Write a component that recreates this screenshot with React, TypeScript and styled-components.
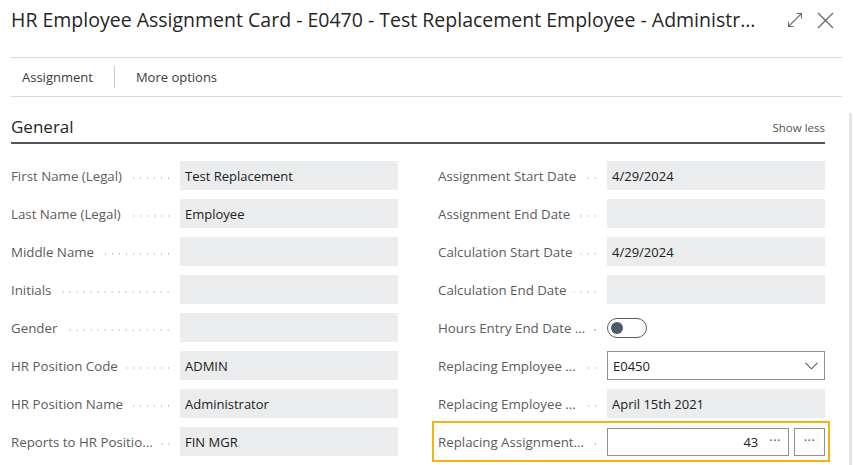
import React from 'react'
import styled, { createGlobalStyle, css } from 'styled-components'

const GlobalStyle = createGlobalStyle`
  html, body {
    margin: 0;
    padding: 0;
    background: #ffffff;
  }
  body {
    font-family: 'Open Sans', 'Noto Sans', sans-serif;
    color: #212121;
  }
  * {
    box-sizing: border-box;
  }
`

type Field = {
  label: string
  value?: string
  kind?: 'text' | 'toggle' | 'select' | 'lookup'
}

const leftFields: Field[] = [
  { label: 'First Name (Legal)', value: 'Test Replacement' },
  { label: 'Last Name (Legal)', value: 'Employee' },
  { label: 'Middle Name' },
  { label: 'Initials' },
  { label: 'Gender' },
  { label: 'HR Position Code', value: 'ADMIN' },
  { label: 'HR Position Name', value: 'Administrator' },
  { label: 'Reports to HR Positio...', value: 'FIN MGR' },
]

const rightFields: Field[] = [
  { label: 'Assignment Start Date', value: '4/29/2024' },
  { label: 'Assignment End Date' },
  { label: 'Calculation Start Date', value: '4/29/2024' },
  { label: 'Calculation End Date' },
  { label: 'Hours Entry End Date ...', kind: 'toggle' },
  { label: 'Replacing Employee ...', value: 'E0450', kind: 'select' },
  { label: 'Replacing Employee ...', value: 'April 15th 2021' },
  { label: 'Replacing Assignment...', value: '43', kind: 'lookup' },
]

const Page = styled.div`
  width: 853px;
  height: 465px;
  overflow: hidden;
  display: flex;
  flex-direction: column;
`

const Header = styled.div`
  height: 58px;
  margin: 0 11px;
  padding-top: 7px;
  display: flex;
  align-items: flex-start;
  border-bottom: 1px solid #d8d8d8;
`

const Title = styled.h1`
  margin: 0;
  width: 752px;
  font-size: 19.5px;
  font-weight: 400;
  line-height: 26px;
  color: #262626;
  white-space: nowrap;
`

const HeaderIcons = styled.div`
  display: flex;
  align-items: center;
  gap: 14px;
  margin-left: 24px;
  height: 26px;
  color: #6b6b6b;
`

const ActionBar = styled.div`
  height: 39px;
  margin: 0 11px;
  display: flex;
  align-items: center;
  border-bottom: 1px solid #d8d8d8;
`

const Action = styled.span`
  font-size: 13px;
  color: #3b3b3b;
  padding: 0 11px;
`

const ActionDivider = styled.span`
  width: 1px;
  height: 22px;
  background: #c8c8c8;
  margin: 0 10px;
`

const Body = styled.div`
  flex: 1;
  display: flex;
  min-height: 0;
`

const Content = styled.div`
  flex: 1;
  padding: 0 24px 0 11px;
`

const Scrollbar = styled.div`
  width: 3px;
  margin: 16px 1px 0 0;
  background: #e4e4e4;
`

const SectionHead = styled.div`
  height: 47px;
  display: flex;
  align-items: flex-end;
  justify-content: space-between;
  border-bottom: 2px solid #51565b;
  padding-bottom: 3px;
`

const SectionTitle = styled.h2`
  margin: 0;
  font-size: 17px;
  font-weight: 400;
  line-height: 24px;
  color: #262626;
`

const ShowLess = styled.span`
  font-size: 11.5px;
  color: #505050;
  line-height: 20px;
  margin-bottom: 1px;
`

const Grid = styled.div`
  display: grid;
  grid-template-columns: 387px 387px;
  column-gap: 40px;
  margin-top: 17px;
`

const Column = styled.div`
  display: flex;
  flex-direction: column;
  gap: 9px;
`

const Row = styled.div<{ $focused?: boolean }>`
  position: relative;
  display: flex;
  align-items: center;
  height: 29px;

  ${({ $focused }) =>
    $focused &&
    css`
      &::after {
        content: '';
        position: absolute;
        left: -6px;
        right: -5px;
        top: -6px;
        bottom: -6px;
        border: 2px solid #f3b40f;
        pointer-events: none;
      }
    `}
`

const Label = styled.div`
  width: 169px;
  flex-shrink: 0;
  display: flex;
  align-items: center;
  padding-right: 8px;
  font-size: 13.3px;
  color: #5c5c5c;
  white-space: nowrap;
  overflow: hidden;
`

const LabelText = styled.span`
  flex-shrink: 0;
`

const Leader = styled.span`
  flex: 1;
  height: 4px;
  margin: 4px 0 0 8px;
  background-image: radial-gradient(circle, #c4c4c4 0.75px, transparent 1.1px);
  background-size: 7px 4px;
  background-position: right center;
  background-repeat: repeat-x;
`

const Input = styled.div<{ $variant?: 'plain' | 'boxed' }>`
  flex: 1;
  height: 29px;
  display: flex;
  align-items: center;
  padding: 0 5px;
  font-size: 13px;
  color: #212121;
  background: #eaeced;

  ${({ $variant }) =>
    $variant === 'boxed' &&
    css`
      background: #ffffff;
      border: 1px solid #8f8f8f;
      justify-content: space-between;
      padding: 0 6px 0 5px;
    `}
`

const ToggleWrap = styled.div`
  flex: 1;
  display: flex;
  align-items: center;
`

const Toggle = styled.div`
  width: 40px;
  height: 20px;
  border: 1px solid #5b5b5b;
  border-radius: 10px;
  display: flex;
  align-items: center;
  padding-left: 3px;

  &::before {
    content: '';
    width: 12px;
    height: 12px;
    border-radius: 50%;
    background: #4f5a6a;
  }
`

const LookupWrap = styled.div`
  flex: 1;
  display: flex;
  align-items: center;
  gap: 5px;
  height: 29px;
`

const LookupInput = styled.div`
  flex: 1;
  height: 28px;
  display: flex;
  align-items: center;
  justify-content: flex-end;
  gap: 11px;
  padding: 0 7px;
  border: 1px solid #8f8f8f;
  font-size: 13px;
  color: #212121;
`

const Dots = styled.span`
  color: #505050;
  font-size: 13px;
  letter-spacing: 0.5px;
  line-height: 1;
  padding-bottom: 2px;
`

const LookupButton = styled.div`
  width: 31px;
  height: 28px;
  border: 1px solid #8f8f8f;
  display: flex;
  align-items: center;
  justify-content: center;
`

const Chevron = () => (
  <svg width="13" height="8" viewBox="0 0 13 8" fill="none">
    <path d="M0.5 0.8 L6.5 6.8 L12.5 0.8" stroke="#5a5a5a" strokeWidth="1.1" />
  </svg>
)

const ExpandIcon = () => (
  <svg width="16" height="16" viewBox="0 0 16 16" fill="none">
    <path
      d="M1.5 14.5 L14.5 1.5 M9.5 1.5 H14.5 V6.5 M1.5 9.5 V14.5 H6.5"
      stroke="#6b6b6b"
      strokeWidth="1.1"
    />
  </svg>
)

const CloseIcon = () => (
  <svg width="17" height="17" viewBox="0 0 17 17" fill="none">
    <path d="M1 1 L16 16 M16 1 L1 16" stroke="#6b6b6b" strokeWidth="1.3" />
  </svg>
)

function FieldRow({ field }: { field: Field }) {
  const kind = field.kind ?? 'text'
  return (
    <Row $focused={kind === 'lookup'}>
      <Label>
        <LabelText>{field.label}</LabelText>
        <Leader />
      </Label>
      {kind === 'text' && <Input>{field.value}</Input>}
      {kind === 'toggle' && (
        <ToggleWrap>
          <Toggle />
        </ToggleWrap>
      )}
      {kind === 'select' && (
        <Input $variant="boxed">
          <span>{field.value}</span>
          <Chevron />
        </Input>
      )}
      {kind === 'lookup' && (
        <LookupWrap>
          <LookupInput>
            <span>{field.value}</span>
            <Dots>···</Dots>
          </LookupInput>
          <LookupButton>
            <Dots>···</Dots>
          </LookupButton>
        </LookupWrap>
      )}
    </Row>
  )
}

export default function App() {
  return (
    <>
      <GlobalStyle />
      <Page>
        <Header>
          <Title>HR Employee Assignment Card - E0470 - Test Replacement Employee - Administr...</Title>
          <HeaderIcons>
            <ExpandIcon />
            <CloseIcon />
          </HeaderIcons>
        </Header>

        <ActionBar>
          <Action>Assignment</Action>
          <ActionDivider />
          <Action>More options</Action>
        </ActionBar>

        <Body>
          <Content>
            <SectionHead>
              <SectionTitle>General</SectionTitle>
              <ShowLess>Show less</ShowLess>
            </SectionHead>

            <Grid>
              <Column>
                {leftFields.map((f, i) => (
                  <FieldRow field={f} key={`l-${i}`} />
                ))}
              </Column>
              <Column>
                {rightFields.map((f, i) => (
                  <FieldRow field={f} key={`r-${i}`} />
                ))}
              </Column>
            </Grid>
          </Content>
          <Scrollbar />
        </Body>
      </Page>
    </>
  )
}
